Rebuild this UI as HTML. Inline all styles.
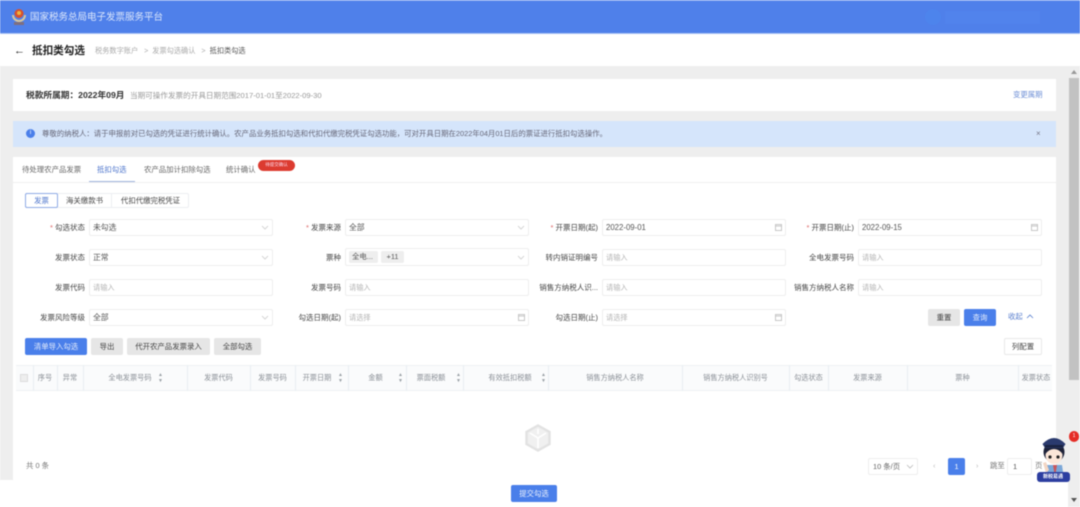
<!DOCTYPE html>
<html lang="zh">
<head>
<meta charset="utf-8">
<title>抵扣类勾选</title>
<style>
html,body{margin:0;padding:0;background:#fff}
body{width:1080px;height:507px;overflow:hidden;position:relative}
#w{position:absolute;left:0;top:0;width:1080px;height:507px;overflow:hidden;font-family:"Liberation Sans","Noto Sans CJK SC",sans-serif;font-size:7.4px;color:#444;filter:blur(.6px);background:#fff}
#w div{position:absolute;box-sizing:border-box;white-space:nowrap}
.l{text-align:right;width:80px;height:16px;line-height:17px;color:#444;font-size:7.5px}
.i{width:184px;height:17px;background:#fff;border:1px solid #eeeeee;border-radius:2px;line-height:15px;padding-left:3px;color:#555;font-size:7.8px}
.p{color:#b5b5b5;font-size:7.2px}
.b{height:17px;line-height:17px;text-align:center;border-radius:2px;background:#e6e6e6;color:#444}
.blue{background:#4a7fea;color:#e4ecfc}
.h{top:365px;height:26px;line-height:26px;text-align:center;color:#8a8f96;font-size:7.2px}
.v{top:365px;width:1px;height:26px;background:#e9edf2}
.s{top:372px;width:3px;height:12px;color:#9aa0a6;font-size:5px;line-height:6px;text-align:center}
svg{position:absolute;overflow:visible}
</style>
</head>
<body>
<div id="w">
<!-- header -->
<div style="left:0;top:0;width:1080px;height:34px;background:#4f80ea;border-top:1px solid #83a6f0;border-bottom:1px solid #a9c2f5"></div>
<svg style="left:11px;top:7px" width="16" height="20" viewBox="0 0 16 20"><path d="M2 8a6 6 0 0 0 12 0" fill="none" stroke="#d6c7a0" stroke-width="2"/><circle cx="8" cy="6.5" r="4.5" fill="#d8512e"/><circle cx="8" cy="6" r="2" fill="#efb43d"/><rect x="3" y="15" width="10" height="3" fill="#7f6f7f"/></svg>
<div style="left:30px;top:11px;font-size:9.5px;line-height:14px;color:#dbe6fb">国家税务总局电子发票服务平台</div>
<div style="left:925px;top:9px;width:16px;height:16px;border-radius:8px;background:#4d84ec"></div>
<div style="left:945px;top:11px;width:95px;height:13px;background:#5183ec"></div>
<!-- sub header -->
<div style="left:14px;top:44px;font-size:11px;line-height:14px;color:#222;font-weight:bold">←</div>
<div style="left:32px;top:44px;font-size:10.6px;line-height:15px;color:#222;font-weight:bold">抵扣类勾选</div>
<div style="left:95px;top:45px;font-size:7.2px;line-height:12px;color:#aaa">税务数字账户 &nbsp;&nbsp;&gt;&nbsp; 发票勾选确认 &nbsp;&nbsp;&gt;&nbsp; <span style="color:#555">抵扣类勾选</span></div>
<!-- gray bg -->
<div style="left:0;top:66px;width:1080px;height:414px;background:#eeeeee"></div>
<div style="left:1068px;top:480px;width:12px;height:27px;background:#eeeeee"></div>
<!-- scrollbar -->
<div style="left:1069px;top:78px;width:10px;height:302px;background:#c2c2c2"></div>
<svg style="left:1071px;top:70px" width="6" height="4"><path d="M0 4L3 0L6 4Z" fill="#999"/></svg>
<svg style="left:1071px;top:498px" width="6" height="4"><path d="M0 0L3 4L6 0Z" fill="#555"/></svg>
<!-- period card -->
<div style="left:13px;top:79px;width:1043px;height:32px;background:#fff"></div>
<div style="left:26px;top:88px;font-size:8.7px;line-height:14px;color:#333;font-weight:bold">税款所属期：2022年09月</div>
<div style="left:130px;top:89px;font-size:7.6px;line-height:13px;color:#999">当期可操作发票的开具日期范围2017-01-01至2022-09-30</div>
<div style="left:1013px;top:88px;font-size:7.4px;line-height:13px;color:#6e8fd6">变更属期</div>
<!-- alert -->
<div style="left:13px;top:121px;width:1043px;height:26px;background:#d5e5fb"></div>
<div style="left:26px;top:129px;width:9px;height:9px;border-radius:5px;background:#4a7fea;color:#fff;font-size:6px;line-height:9px;text-align:center">i</div>
<div style="left:42px;top:127px;font-size:7.4px;line-height:13px;color:#667">尊敬的纳税人：请于申报前对已勾选的凭证进行统计确认。农产品业务抵扣勾选和代扣代缴完税凭证勾选功能，可对开具日期在2022年04月01日后的票证进行抵扣勾选操作。</div>
<div style="left:1036px;top:128px;font-size:8px;line-height:12px;color:#778">×</div>
<!-- main card -->
<div style="left:13px;top:157px;width:1043px;height:323px;background:#fff"></div>
<div style="left:13px;top:182px;width:1043px;height:1px;background:#f0f0f0"></div>
<div style="left:22px;top:163px;font-size:7.4px;line-height:13px;color:#666">待处理农产品发票</div>
<div style="left:97px;top:163px;font-size:7.4px;line-height:13px;color:#4d75cc">抵扣勾选</div>
<div style="left:144px;top:163px;font-size:7.4px;line-height:13px;color:#666">农产品加计扣除勾选</div>
<div style="left:226px;top:163px;font-size:7.4px;line-height:13px;color:#666">统计确认</div>
<div style="left:89px;top:181px;width:46px;height:1px;background:#9fb4dd"></div>
<div style="left:258px;top:160px;width:37px;height:11px;border-radius:6px;background:#dc3b30;color:#fde;font-size:4.5px;line-height:10px;text-align:center">待提交确认</div>
<!-- subtabs -->
<div style="left:25px;top:193px;width:164px;height:15px;border:1px solid #eceef2;border-radius:2px"></div>
<div style="left:25px;top:193px;width:33px;height:15px;border:1px solid #8fabe6;border-radius:2px;color:#4d75cc;text-align:center;line-height:13px">发票</div>
<div style="left:58px;top:193px;width:54px;height:15px;line-height:15px;text-align:center;border-right:1px solid #eceef2;color:#444">海关缴款书</div>
<div style="left:112px;top:193px;width:77px;height:15px;line-height:15px;text-align:center;color:#444">代扣代缴完税凭证</div>
<!-- row 1 -->
<div class="l" style="left:5px;top:219px"><span style="color:#d66">*</span> 勾选状态</div>
<div class="i" style="left:89px;top:219px">未勾选</div>
<div class="l" style="left:261px;top:219px"><span style="color:#d66">*</span> 发票来源</div>
<div class="i" style="left:345px;top:219px">全部</div>
<div class="l" style="left:518px;top:219px"><span style="color:#d66">*</span> 开票日期(起)</div>
<div class="i" style="left:602px;top:219px">2022-09-01</div>
<div class="l" style="left:774px;top:219px"><span style="color:#d66">*</span> 开票日期(止)</div>
<div class="i" style="left:858px;top:219px">2022-09-15</div>
<!-- row 2 -->
<div class="l" style="left:5px;top:249px">发票状态</div>
<div class="i" style="left:89px;top:249px">正常</div>
<div class="l" style="left:261px;top:249px">票种</div>
<div class="i" style="left:345px;top:248px;height:18px"></div>
<div style="left:349px;top:251px;width:29px;height:12px;background:#eee;border-radius:2px;line-height:12px;padding-left:3px;color:#555">全电...</div>
<div style="left:381px;top:251px;width:23px;height:12px;background:#eee;border-radius:2px;line-height:12px;text-align:center;color:#555">+11</div>
<div class="l" style="left:518px;top:249px">转内销证明编号</div>
<div class="i p" style="left:602px;top:249px">请输入</div>
<div class="l" style="left:774px;top:249px">全电发票号码</div>
<div class="i p" style="left:858px;top:249px">请输入</div>
<!-- row 3 -->
<div class="l" style="left:5px;top:279px">发票代码</div>
<div class="i p" style="left:89px;top:279px">请输入</div>
<div class="l" style="left:261px;top:279px">发票号码</div>
<div class="i p" style="left:345px;top:279px">请输入</div>
<div class="l" style="left:518px;top:279px">销售方纳税人识...</div>
<div class="i p" style="left:602px;top:279px">请输入</div>
<div class="l" style="left:774px;top:279px">销售方纳税人名称</div>
<div class="i p" style="left:858px;top:279px">请输入</div>
<!-- row 4 -->
<div class="l" style="left:5px;top:309px">发票风险等级</div>
<div class="i" style="left:89px;top:309px">全部</div>
<div class="l" style="left:261px;top:309px">勾选日期(起)</div>
<div class="i p" style="left:345px;top:309px">请选择</div>
<div class="l" style="left:518px;top:309px">勾选日期(止)</div>
<div class="i p" style="left:602px;top:309px">请选择</div>
<!-- chevrons -->
<svg style="left:262px;top:226px" width="6" height="3"><path d="M0 0L3 3L6 0" fill="none" stroke="#ccc" stroke-width=".8"/></svg>
<svg style="left:518px;top:226px" width="6" height="3"><path d="M0 0L3 3L6 0" fill="none" stroke="#ccc" stroke-width=".8"/></svg>
<svg style="left:262px;top:256px" width="6" height="3"><path d="M0 0L3 3L6 0" fill="none" stroke="#ccc" stroke-width=".8"/></svg>
<svg style="left:518px;top:256px" width="6" height="3"><path d="M0 0L3 3L6 0" fill="none" stroke="#ccc" stroke-width=".8"/></svg>
<svg style="left:262px;top:316px" width="6" height="3"><path d="M0 0L3 3L6 0" fill="none" stroke="#ccc" stroke-width=".8"/></svg>
<!-- calendars -->
<svg style="left:775px;top:224px" width="7" height="7"><rect x=".5" y=".5" width="6" height="6" fill="none" stroke="#bbb" stroke-width=".8"/><path d="M.5 2H6.5" stroke="#bbb" stroke-width=".8"/></svg>
<svg style="left:1031px;top:224px" width="7" height="7"><rect x=".5" y=".5" width="6" height="6" fill="none" stroke="#bbb" stroke-width=".8"/><path d="M.5 2H6.5" stroke="#bbb" stroke-width=".8"/></svg>
<svg style="left:518px;top:314px" width="7" height="7"><rect x=".5" y=".5" width="6" height="6" fill="none" stroke="#bbb" stroke-width=".8"/><path d="M.5 2H6.5" stroke="#bbb" stroke-width=".8"/></svg>
<svg style="left:775px;top:314px" width="7" height="7"><rect x=".5" y=".5" width="6" height="6" fill="none" stroke="#bbb" stroke-width=".8"/><path d="M.5 2H6.5" stroke="#bbb" stroke-width=".8"/></svg>
<!-- query buttons -->
<div class="b" style="left:928px;top:309px;width:32px">重置</div>
<div class="b blue" style="left:964px;top:309px;width:32px">查询</div>
<div style="left:1008px;top:310px;line-height:14px;color:#5b80cf">收起</div>
<svg style="left:1027px;top:315px" width="6" height="3"><path d="M0 3L3 0L6 3" fill="none" stroke="#5b80cf" stroke-width=".8"/></svg>
<!-- actions -->
<div class="b blue" style="left:25px;top:338px;width:62px">清单导入勾选</div>
<div class="b" style="left:91px;top:338px;width:32px">导出</div>
<div class="b" style="left:127px;top:338px;width:83px">代开农产品发票录入</div>
<div class="b" style="left:214px;top:338px;width:47px">全部勾选</div>
<div class="b" style="left:1004px;top:338px;width:38px;background:#fff;border:1px solid #e8e8e8;line-height:15px">列配置</div>
<!-- table header -->
<div style="left:16px;top:365px;width:1036px;height:26px;background:#fafbfc;border-top:1px solid #eff1f4;border-bottom:1px solid #eff1f4"></div>
<div style="left:20px;top:374px;width:8px;height:8px;background:#eee;border:1px solid #ddd"></div>
<div class="v" style="left:33px"></div><div class="v" style="left:57px"></div><div class="v" style="left:83px"></div><div class="v" style="left:187px"></div><div class="v" style="left:250px"></div><div class="v" style="left:295px"></div><div class="v" style="left:348px"></div><div class="v" style="left:406px"></div><div class="v" style="left:463px"></div><div class="v" style="left:548px"></div><div class="v" style="left:682px"></div><div class="v" style="left:789px"></div><div class="v" style="left:828px"></div><div class="v" style="left:907px"></div><div class="v" style="left:1018px"></div>
<div class="h" style="left:33px;width:24px">序号</div>
<div class="h" style="left:57px;width:26px">异常</div>
<div class="h" style="left:100px;width:60px">全电发票号码</div>
<div class="h" style="left:187px;width:63px">发票代码</div>
<div class="h" style="left:250px;width:45px">发票号码</div>
<div class="h" style="left:295px;width:44px">开票日期</div>
<div class="h" style="left:348px;width:55px">金额</div>
<div class="h" style="left:406px;width:50px">票面税额</div>
<div class="h" style="left:480px;width:60px">有效抵扣税额</div>
<div class="h" style="left:548px;width:134px">销售方纳税人名称</div>
<div class="h" style="left:682px;width:107px">销售方纳税人识别号</div>
<div class="h" style="left:789px;width:39px">勾选状态</div>
<div class="h" style="left:828px;width:79px">发票来源</div>
<div class="h" style="left:907px;width:111px">票种</div>
<div class="h" style="left:1018px;width:36px">发票状态</div>
<div class="s" style="left:158px">▲<br>▼</div>
<div class="s" style="left:338px">▲<br>▼</div>
<div class="s" style="left:398px">▲<br>▼</div>
<div class="s" style="left:456px">▲<br>▼</div>
<div class="s" style="left:541px">▲<br>▼</div>
<!-- empty -->
<svg style="left:525px;top:424px" width="26" height="28" viewBox="0 0 26 28"><path d="M13 1.5L24.5 8V20L13 26.5L1.5 20V8Z" fill="#f0f0f0" stroke="#e2e2e2" stroke-width="2.4"/><path d="M5 9L13 14L21 9M13 14V24M13 5V10" fill="none" stroke="#fff" stroke-width="1.6"/></svg>
<!-- pagination -->
<div style="left:26px;top:459px;line-height:14px;color:#777">共 0 条</div>
<div style="left:868px;top:458px;width:50px;height:17px;border:1px solid #eee;border-radius:2px;line-height:15px;padding-left:4px;color:#666">10 条/页</div>
<svg style="left:907px;top:465px" width="6" height="3"><path d="M0 0L3 3L6 0" fill="none" stroke="#bbb" stroke-width=".8"/></svg>
<div style="left:933px;top:459px;line-height:14px;color:#bbb">‹</div>
<div class="b blue" style="left:948px;top:458px;width:17px;color:#fff">1</div>
<div style="left:976px;top:459px;line-height:14px;color:#bbb">›</div>
<div style="left:990px;top:459px;line-height:14px;color:#777">跳至</div>
<div style="left:1007px;top:458px;width:25px;height:17px;border:1px solid #eee;border-radius:2px;line-height:15px;padding-left:5px;color:#555;background:#fff">1</div>
<div style="left:1035px;top:459px;line-height:14px;color:#777">页</div>
<!-- submit -->
<div class="b blue" style="left:511px;top:485px;width:46px;color:#eef3fd">提交勾选</div>
<!-- mascot -->
<svg style="left:1036px;top:433px" width="36" height="50" viewBox="0 0 36 50">
<path d="M11 32H26L28 46H9Z" fill="#7ba7d8"/>
<path d="M17 32L19 44L21 32Z" fill="#c9555a"/>
<path d="M7 30L10 40L13 37L10 29Z" fill="#f3d6c4"/>
<circle cx="18" cy="19" r="10.5" fill="#1c2138"/>
<ellipse cx="18" cy="22" rx="8.5" ry="9" fill="#fbe6d8"/>
<path d="M9.5 21Q10 15 13 14L23 14Q26 15 26.5 21Q23 16 18 16Q13 16 9.5 21Z" fill="#1c2138"/>
<path d="M6.5 11Q18 -1 29.5 11L27 15H9Z" fill="#2a3a6e"/>
<rect x="9" y="12" width="18" height="2.4" fill="#1a2340"/>
<circle cx="14" cy="24" r="1.6" fill="#222"/><circle cx="22" cy="24" r="1.6" fill="#222"/>
<rect x="1" y="39" width="33" height="10" rx="3" fill="#2c3ea0"/>
</svg>
<div style="left:1043px;top:473px;font-size:5px;line-height:8px;color:#fff;font-weight:bold">新税易通</div>
<div style="left:1069px;top:431px;width:10px;height:11px;border-radius:6px;background:#e52d27;color:#fff;font-size:5px;line-height:11px;text-align:center">1</div>
</div>
</body>
</html>
